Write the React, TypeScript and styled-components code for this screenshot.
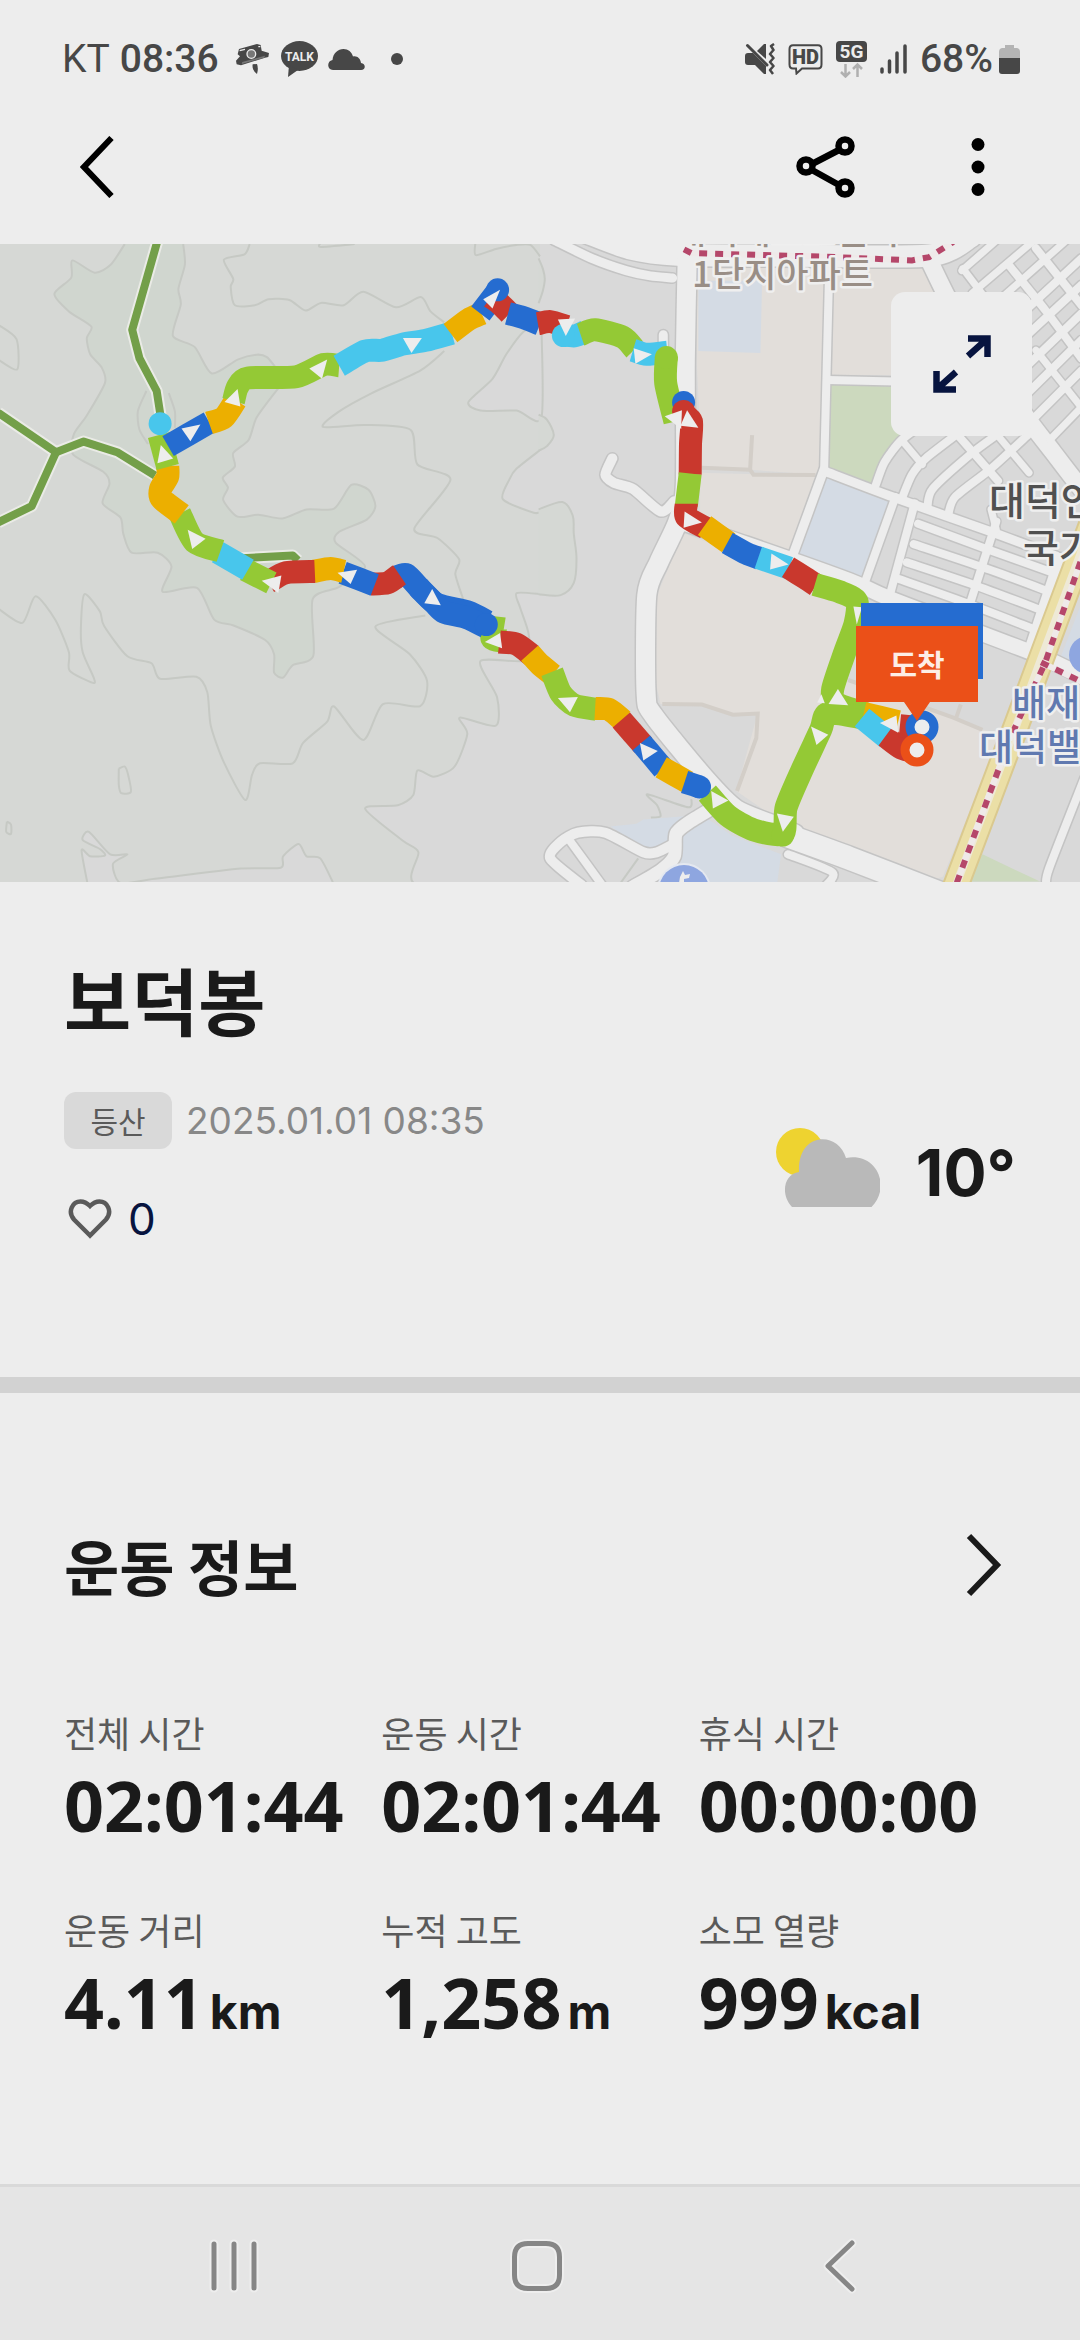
import React from 'react';
import styled, { createGlobalStyle } from 'styled-components';

const sans = `"Noto Sans CJK KR", "Noto Sans", sans-serif`;
const latin = `Inter, "Noto Sans CJK KR", sans-serif`;

const color = {
  page: '#ededed',
  ink: '#1a1a1a',
  navy: '#07143f',
  muted: '#5a5a5a',
  faint: '#888888',
  status: '#474747',
};

const GlobalStyle = createGlobalStyle`
  * { box-sizing: border-box; }
  body { margin: 0; background: ${color.page}; font-family: ${sans}; color: ${color.ink}; }
  button { border: 0; padding: 0; background: none; color: inherit; font: inherit; cursor: pointer; }
  svg { display: block; }
`;

const Screen = styled.div`
  display: flex;
  flex-direction: column;
  min-height: 100vh;
  overflow: hidden;
`;

/* ---------- status bar ---------- */

const StatusBar = styled.div`
  display: flex;
  justify-content: space-between;
  align-items: center;
  padding: 28px 60px 0 62px;
  height: 90px;
  color: ${color.status};
  font: 500 39px/48px Roboto, sans-serif;
`;

const StatusGroup = styled.div<{ $gap: number }>`
  display: flex;
  align-items: center;
  gap: ${(p) => p.$gap}px;
`;

const Carrier = styled.span`
  font-weight: 400;
`;

const Clock = styled.span`
  margin-right: 6px;
`;

const Dot = styled.span`
  width: 12px;
  height: 12px;
  margin-left: 16px;
  border-radius: 50%;
  background: ${color.status};
`;

const Battery = styled.span`
  display: flex;
  align-items: center;
  gap: 6px;
`;

/* ---------- app bar ---------- */

const AppBar = styled.header`
  display: flex;
  justify-content: space-between;
  align-items: center;
  height: 154px;
  padding: 0 58px 0 53px;
`;

const Actions = styled.div`
  display: flex;
  gap: 64px;
`;

const IconButton = styled.button`
  display: grid;
  place-items: center;
  width: 88px;
  height: 88px;
`;

/* ---------- map ---------- */

const MapFrame = styled.section`
  position: relative;
  line-height: 0;
`;

const MapCanvas = styled.svg`
  width: 100%;
  height: auto;
`;

const ExpandButton = styled.button`
  position: absolute;
  top: 48px;
  right: 48px;
  display: grid;
  place-items: center;
  width: 141px;
  height: 144px;
  border-radius: 14px;
  background: ${color.page};
`;

/* ---------- summary ---------- */

const Summary = styled.section`
  padding: 64px 64px 134px;
  border-bottom: 16px solid #d2d2d2;
`;

const Title = styled.h1`
  margin: 0 0 42px;
  font-size: 73px;
  line-height: 104px;
  font-weight: 700;
`;

const SummaryRow = styled.div`
  display: flex;
  justify-content: space-between;
  align-items: center;
`;

const Details = styled.div`
  display: flex;
  flex-direction: column;
  align-items: flex-start;
  gap: 46px;
`;

const Meta = styled.div`
  display: flex;
  align-items: center;
  gap: 14px;
`;

const Badge = styled.span`
  width: 108px;
  border-radius: 12px;
  background: #d9d9d9;
  color: ${color.muted};
  font-size: 30px;
  line-height: 57px;
  text-align: center;
`;

const DateText = styled.time`
  color: ${color.faint};
  font: 400 37px/57px ${latin};
`;

const LikeButton = styled.button`
  display: flex;
  align-items: center;
  gap: 16px;
  padding-left: 4px;
  color: ${color.navy};
  font: 400 44px/48px ${latin};
`;

const Weather = styled.div`
  display: flex;
  align-items: center;
  gap: 36px;
`;

const Temperature = styled.span`
  padding-top: 10px;
  font: 700 64px/76px ${latin};
`;

/* ---------- workout info ---------- */

const Info = styled.section`
  padding: 128px 64px 60px;
`;

const InfoHeader = styled.div`
  display: flex;
  justify-content: space-between;
  align-items: center;
  margin-bottom: 97px;
`;

const InfoTitle = styled.h2`
  margin: 0;
  font-size: 60px;
  line-height: 88px;
  font-weight: 700;
`;

const MoreButton = styled.button`
  padding: 12px 14px;
`;

const Stats = styled.dl`
  display: grid;
  grid-template-columns: repeat(3, 1fr);
  row-gap: 56px;
  margin: 0;
`;

const Stat = styled.div`
  display: flex;
  flex-direction: column;
  gap: 5px;
`;

const StatLabel = styled.dt`
  color: ${color.muted};
  font-size: 36px;
  line-height: 52px;
`;

const StatValue = styled.dd`
  margin: 0;
  white-space: nowrap;
  font: 700 70px/84px "Noto Sans", sans-serif;
`;

const Unit = styled.span`
  margin-left: 6px;
  font-family: ${latin};
  font-size: 48px;
  line-height: 1;
`;

/* ---------- system navigation ---------- */

const NavBar = styled.nav`
  display: grid;
  grid-template-columns: repeat(3, 1fr);
  margin-top: auto;
  height: 156px;
  padding: 0 88px 0 82px;
  border-top: 3px solid #d9d9d9;
  background: #e5e5e5;
`;

const NavButton = styled.button`
  display: grid;
  place-items: center;
  height: 158px;
`;

/* ---------- map data ---------- */

// The map is digitised as two square sheets, each 1568 units a side,
// covering the left and the right half of the canvas.
type Sheet = 'w' | 'e';
type Point = [number, number];

const project = (sheet: Sheet, coords: string): Point[] => {
  const n = coords.trim().split(/[\s,]+/).map(Number);
  const out: Point[] = [];
  for (let i = 0; i < n.length; i += 2) {
    const x = (n[i] * 540) / 1568 + (sheet === 'e' ? 540 : 0);
    const y = (n[i + 1] * 640) / 1568 - 4;
    out.push([Math.round(x * 10) / 10, Math.round(y * 10) / 10]);
  }
  return out;
};

const straight = (sheet: Sheet, coords: string, close = false) =>
  'M' + project(sheet, coords).map((p) => p.join(' ')).join('L') + (close ? 'Z' : '');

const curved = (sheet: Sheet, coords: string, tension = 8) => {
  const p = project(sheet, coords);
  let d = `M${p[0].join(' ')}`;
  for (let i = 0; i < p.length - 1; i++) {
    const a = p[i - 1] || p[i];
    const b = p[i];
    const c = p[i + 1];
    const e = p[i + 2] || c;
    d += `C${b[0] + (c[0] - a[0]) / tension} ${b[1] + (c[1] - a[1]) / tension} ${c[0] - (e[0] - b[0]) / tension} ${c[1] - (e[1] - b[1]) / tension} ${c[0]} ${c[1]}`;
  }
  return d;
};

const valley =
  '362 10 322 60 275 80 210 50 207 92 158 132 200 175 265 212 252 240 262 280 295 312 305 350 252 430 215 475 212 525 300 568 318 597 298 645 350 680 358 720 382 766 458 766 498 800 472 862 572 852 622 930 680 945 770 980 796 1015 796 1060 822 1072 850 1042 910 1018 908 880 985 850 1060 800 975 742 985 715 1065 685 1090 652 1070 612 1020 600 970 658 890 660 820 682 750 673 690 678 648 637 662 607 647 582 682 555 677 522 722 490 745 435 800 372 830 340 800 312 775 287 745 281 690 293 615 327 565 262 502 235 525 158 518 120 537 60 532 10';

const plains: [Sheet, string][] = [
  ['w', '1568 205 1520 225 1470 280 1430 340 1360 397 1395 418 1500 418 1572 435 1572 205'],
  ['w', '1572 512 1500 560 1480 585 1460 635 1550 668 1572 665'],
  ['w', '1572 868 1500 865 1510 900 1535 965 1530 1030 1395 1032 1443 1120 1440 1190 1335 1170 1357 1210 1320 1290 1260 1315 1212 1300 1200 1360 1155 1385 1060 1393 1170 1472 1215 1500 1212 1580 1572 1580'],
  ['w', '255 1580 237 1495 262 1510 305 1508 290 1492 240 1470 258 1450 320 1505 370 1505 328 1528 350 1575 450 1565 700 1540 815 1538 822 1510 867 1480 890 1510 930 1515 970 1580'],
];

const woods: string[] = [
  '-4 45 8 70 14 95 8 125 -4 155',
  '-4 428 20 440 40 478 20 505 -4 516',
  '-4 660 65 642 95 675 98 720 106 780 98 840 60 870 -4 868',
];

const contours: [Sheet, string][] = [
  ['w', '725 10 710 35 650 48 677 95 670 115 682 160 740 160 780 145 840 147 887 173 932 154 998 160 1055 127 1150 165 1222 140 1250 175 1290 202'],
  ['w', '930 8 932 17 1030 10'],
  ['w', '1380 8 1382 37 1440 22 1500 12 1540 12 1568 40'],
  ['w', '-5 208 48 243 50 317 -5 293'],
  ['w', '1290 272 1220 320 1080 375 985 420 938 458 1060 453 1192 465 1212 550 1308 587 1203 707 1270 730 1333 782 1322 818 1345 880'],
  ['w', '425 370 400 420 405 465 430 500'],
  ['w', '490 375 508 420 508 460'],
  ['w', '-5 903 65 938 103 873 160 930 200 1010 202 1055 270 1085 272 1072 240 1010 235 950 245 868 290 910 302 945 370 1020 440 1037 465 1075 570 1070 602 1108 612 1190 650 1280 712 1372 732 1310 755 1282 850 1282 880 1232 950 1180 970 1143 1055 1225 1112 1137 1220 1142 1240 1080 1190 1015 1090 947 1235 920'],
  ['w', '345 1295 362 1290 372 1310 380 1352 352 1355 345 1335 345 1295'],
  ['w', '20 1425 32 1432 32 1455 18 1450 20 1425'],
];

const blocks: [string, string][] = [
  ['#e2deda', '455 66 826 66 810 575 470 555 455 300'],
  ['#e2deda', '852 66 1120 66 1155 130 1155 332 848 330'],
  ['#e2deda', '465 570 800 578 722 765 465 680'],
  ['#e2deda', '415 718 900 870 915 920 880 1075 1285 1200 1340 1210 1170 1560 1140 1568 700 1425 570 1350 632 1160 560 1163 470 1138 350 1137 335 1080 340 870'],
  ['#d4dbe4', '460 100 645 100 640 277 460 272'],
  ['#d4dbe4', '832 578 1025 638 938 834 746 768'],
  ['#d4dbe4', '404 1568 404 1480 430 1435 490 1420 560 1460 700 1505 688 1580 404 1580'],
  ['#d4dbe4', '205 1437 280 1430 300 1420 420 1412 380 1480 310 1492 250 1462'],
  ['#d4dbe4', '1572 890 1508 1030 1572 1050'],
  ['#ccd9be', '845 353 1100 357 1100 470 1030 510 960 596 836 556'],
  ['#ccd9be', '1285 1505 1452 1572 1235 1572'],
];

const roads: [number, string][] = [
  [9, '40 0 150 45 250 75 320 88 385 93'],
  [22, '130 -20 260 20 400 36 700 38 1130 38 1250 -8'],
  [9, '358 232 358 300'],
  [10, '210 535 190 575 215 595 270 610 350 665 390 640'],
  [19, '428 20 422 300 422 600 400 690 345 790 310 870 308 1110 330 1165 480 1320 570 1395 700 1440 740 1455'],
  [23, '720 1460 900 1515 1160 1600'],
  [15, '410 692 600 745 900 835 1020 880 1440 1015 1572 1068'],
  [8, '840 60 825 565'],
  [8, '835 343 1100 348'],
  [9, '825 562 735 770'],
  [9, '825 566 1025 630 1310 715 1500 775'],
  [8, '1032 630 945 835'],
  [17, '1130 50 1215 190 1400 420 1490 520 1572 610'],
  [7, '1225 75 1340 -10'],
  [7, '1255 130 1450 -10'],
  [7, '1330 150 1540 -8'],
  [8, '1400 180 1572 45'],
  [8, '1380 260 1572 110'],
  [8, '1400 320 1572 180'],
  [8, '1410 380 1572 245'],
  [8, '1430 440 1572 320'],
  [7, '1480 490 1572 410'],
  [7, '1228 70 1300 150'],
  [8, '1360 60 1470 175 1572 290'],
  [8, '1440 20 1572 160'],
  [7, '1440 270 1572 410'],
  [8, '975 600 1000 545 1050 490 1130 440'],
  [8, '1050 635 1080 575 1120 535 1220 470'],
  [8, '1125 655 1140 610 1250 525 1330 475'],
  [8, '1185 675 1205 630 1310 560 1420 475'],
  [7, '1055 495 1110 550'],
  [8, '1205 470 1330 590'],
  [7, '1320 470 1420 570'],
  [7, '1310 660 1325 710'],
  [8, '1085 745 1290 803 1480 862'],
  [8, '1098 695 1290 755 1490 815'],
  [8, '1065 790 1260 845 1450 905'],
  [8, '1040 830 1240 890 1430 952'],
  [8, '1088 645 1015 872'],
  [8, '1325 690 1245 900'],
  [11, '1510 780 1420 1010'],
  [10, '120 1580 30 1515 60 1475 110 1452 190 1452 300 1500 340 1500 392 1478'],
  [8, '85 1470 180 1580'],
  [13, '270 1585 350 1545 390 1510 395 1455 430 1428 500 1392'],
  [8, '720 1505 850 1550 820 1590'],
  [8, '1470 1580 1478 1540 1580 1320'],
];

const paths = [
  '470 558 610 563 620 575 800 576',
  '616 478 610 562',
  '355 1137 470 1138 560 1163 632 1160 628 1220 572 1350',
  '895 1078 1200 1170 1285 1200',
  '1222 1138 1208 1172',
];

const trails = [
  '458 0 384 220 405 290 455 370 466 430',
  '-5 423 163 520 243 494 340 520 450 577',
  '163 520 92 652 -5 692',
  '690 780 850 773 865 785',
];

const tint = { b: '#256cd0', r: '#c9382d', a: '#ecaf00', g: '#94c935', s: '#48c6ec' };

const route: [keyof typeof tint, Sheet, string][] = [
  ['g', 'w', '1435 922 1428 975 1465 982'],
  ['b', 'w', '1145 828 1180 820 1225 860 1270 893 1360 912 1415 935'],
  ['b', 'w', '1215 850 1262 890 1290 912 1355 925 1410 948'],
  ['r', 'w', '1450 985 1500 990 1545 1018'],
  ['a', 'w', '1538 1012 1568 1040 1605 1065'],
  ['r', 'w', '1075 843 1125 840 1160 820'],
  ['b', 'w', '995 815 1088 845'],
  ['a', 'w', '910 812 960 805 998 812'],
  ['r', 'w', '780 838 830 815 914 812'],
  ['g', 'w', '712 808 788 840'],
  ['s', 'w', '632 765 720 808'],
  ['g', 'w', '522 670 565 740 640 762'],
  ['a', 'w', '487 553 487 580 466 610 470 635 528 672'],
  ['g', 'w', '462 478 487 556'],
  ['b', 'w', '608 447 488 505'],
  ['a', 'w', '685 392 650 435 607 448'],
  ['g', 'w', '985 308 940 305 860 335 720 338 690 360 678 395'],
  ['s', 'w', '1312 228 1235 246 1170 255 1110 270 1060 272 985 308'],
  ['a', 'w', '1398 180 1360 195 1308 228'],
  ['b', 'w', '1395 180 1445 125'],
  ['r', 'w', '1425 140 1450 155 1480 180'],
  ['b', 'w', '1475 180 1520 190 1568 206'],
  ['s', 'e', '130 225 100 235 65 232'],
  ['r', 'e', '-6 205 30 200 78 212'],
  ['g', 'e', '118 232 160 220 240 238 275 268'],
  ['s', 'e', '270 270 310 280 370 275'],
  ['g', 'e', '367 285 365 350 392 445'],
  ['b', 'e', '400 405 425 410'],
  ['r', 'e', '415 425 440 445 437 500 436 575'],
  ['g', 'e', '436 572 425 650'],
  ['r', 'e', '425 646 425 678 482 706'],
  ['a', 'e', '478 700 548 742'],
  ['b', 'e', '544 742 600 768 638 780'],
  ['s', 'e', '634 778 724 804'],
  ['r', 'e', '720 802 770 828 802 846'],
  ['g', 'e', '798 844 870 862 920 885 915 940 885 1010 850 1100 860 1135 945 1160'],
  ['a', 'e', '940 1160 1040 1180'],
  ['g', 'e', '35 1058 60 1110 100 1140 165 1150'],
  ['a', 'e', '160 1148 200 1150 242 1178'],
  ['r', 'e', '236 1176 300 1238'],
  ['b', 'e', '294 1232 358 1296'],
  ['a', 'e', '352 1292 428 1328'],
  ['b', 'e', '420 1328 463 1340'],
  ['g', 'e', '486 1355 545 1410 620 1445 705 1455 715 1390 760 1300 815 1200 835 1160 935 1170'],
  ['s', 'e', '935 1170 1008 1220'],
  ['r', 'e', '1003 1216 1050 1245 1095 1255'],
  ['r', 'e', '1105 1195 1045 1190'],
];

const blobs: [keyof typeof tint, Sheet, string][] = [
  ['s', 'w', '465 450'],
  ['b', 'w', '1445 122'],
  ['b', 'w', '1412 942'],
  ['s', 'e', '68 234'],
  ['g', 'e', '367 288'],
  ['b', 'e', '417 398'],
  ['r', 'e', '417 420'],
  ['b', 'e', '463 1340'],
  ['g', 'e', '705 1458'],
];

const arrows: [Sheet, string][] = [
  ['w', '1403 145 1452 122 1430 168'],
  ['w', '1170 240 1225 240 1195 277'],
  ['w', '898 315 950 293 935 340'],
  ['w', '652 397 690 365 698 408'],
  ['w', '527 462 582 452 553 493'],
  ['w', '467 502 503 535 457 547'],
  ['w', '545 710 597 732 558 757'],
  ['w', '760 835 817 822 808 865'],
  ['w', '980 815 1037 808 1018 843'],
  ['w', '1255 855 1280 895 1232 890'],
  ['w', '1408 985 1452 963 1458 1000'],
  ['e', '52 195 102 192 75 235'],
  ['e', '272 265 325 280 277 303'],
  ['e', '362 432 412 417 410 463'],
  ['e', '427 417 460 460 408 455'],
  ['e', '420 665 470 692 417 705'],
  ['e', '672 768 722 795 668 807'],
  ['e', '910 898 935 900 920 942'],
  ['e', '865 1100 895 1140 838 1137'],
  ['e', '817 1113 827 1135 805 1133'],
  ['e', '787 1192 837 1212 803 1237'],
  ['e', '688 1405 737 1413 705 1450'],
  ['e', '497 1350 547 1373 502 1393'],
  ['e', '290 1232 342 1252 300 1275'],
  ['e', '52 1122 110 1120 87 1157'],
  ['e', '987 1183 1035 1165 1040 1207'],
];

const highway = '1600 700 1480 970 1385 1185 1195 1610';
const subway = ['1600 715 1465 1040 1365 1220 1195 1610', '1455 1035 1580 1085', '418 23 440 32 830 41 1080 50 1130 42 1200 5'];

const MapLabel = styled.text<{ $size: number }>`
  font: 500 ${(p) => p.$size}px ${sans};
  paint-order: stroke;
  stroke: #efefef;
  stroke-width: 5px;
  stroke-linejoin: round;
`;

const FlagLabel = styled.text`
  font: 700 30px ${sans};
  fill: #fdeee6;
`;

function RouteMap() {
  return (
    <MapCanvas viewBox="0 0 1080 638" role="img" aria-label="이동 경로 지도" fill="none">
      <rect width="1080" height="638" fill="#d9d9d9" />
      <rect width="540" height="638" fill="#d6d8d5" />
      <g stroke="#c6c9c4" strokeWidth="2" strokeLinejoin="round">
        <path d={curved('w', valley)} fill="#d0d6cf" />
        {plains.map(([s, c]) => <path key={c} d={curved(s, c)} fill="#d9d9d9" />)}
        {woods.map((c) => <path key={c} d={curved('e', c, 6)} fill="#d5d8d4" />)}
        {contours.map(([s, c]) => <path key={c} d={curved(s, c)} />)}
        <path d={curved('e', '440 1370 430 1390 312 1358 340 1385 350 1412 322 1415')} />
        <path d={curved('e', '285 1515 230 1580')} />
      </g>
      {blocks.map(([fill, c]) => <path key={c} d={straight('e', c, true)} fill={fill} />)}
      {paths.map((c) => <path key={c} d={straight('e', c)} stroke="#d3cec8" strokeWidth="4" />)}
      <g strokeLinejoin="round" strokeLinecap="round">
        {roads.map(([w, c]) => <path key={c} d={curved('e', c)} stroke="#c4c4c4" strokeWidth={w + 3} />)}
        {roads.map(([w, c]) => <path key={c} d={curved('e', c)} stroke="#ededed" strokeWidth={w} />)}
      </g>
      <path d={straight('e', highway)} stroke="#dac98f" strokeWidth="27" />
      <path d={straight('e', highway)} stroke="#ebdfa6" strokeWidth="23" />
      <path d={straight('e', highway)} stroke="#eee9d6" strokeWidth="8" />
      {subway.map((c) => (
        <g key={c} strokeWidth="6">
          <path d={straight('e', c)} stroke="#efe9e9" />
          <path d={straight('e', c)} stroke="#b5476a" strokeDasharray="8 8" />
        </g>
      ))}
      <g strokeLinejoin="round">
        {trails.map((c) => <path key={c} d={straight('w', c)} stroke="#eaebe6" strokeWidth="12" />)}
        {trails.map((c) => <path key={c} d={straight('w', c)} stroke="#739f49" strokeWidth="8" />)}
      </g>

      <circle cx="684" cy="646" r="27" fill="#e4e8f0" />
      <circle cx="684" cy="646" r="25" fill="#8ea6e0" />
      <path d="M683 627l2 4 5-1-1 4-5 1v4h-5l1-6z" fill="#ededed" />
      <circle cx="1088" cy="411" r="19" fill="#8ea6e0" />

      <MapLabel $size={35} x="674" y="0" fill="#998e86">대덕테크노밸리</MapLabel>
      <MapLabel $size={35} x="692" y="43" fill="#998e86">1단지아파트</MapLabel>
      <MapLabel $size={39} x="989" y="271" fill="#505050">대덕연</MapLabel>
      <MapLabel $size={39} x="1023" y="318" fill="#505050">국가</MapLabel>
      <MapLabel $size={37} x="1012" y="473" fill="#6079b0">배재</MapLabel>
      <MapLabel $size={37} x="979" y="517" fill="#6079b0">대덕밸</MapLabel>

      <g strokeWidth="23" strokeLinejoin="round">
        {route.map(([k, s, c]) => <path key={c} d={curved(s, c)} stroke={tint[k]} />)}
      </g>
      {blobs.map(([k, s, c]) => {
        const [[x, y]] = project(s, c);
        return <circle key={c} cx={x} cy={y} r={11.5} fill={tint[k]} />;
      })}
      {arrows.map(([s, c]) => <path key={c} d={straight(s, c, true)} fill="#ededed" />)}

      <rect x="861" y="359" width="122" height="76" fill="#256cd0" />
      <circle cx="922" cy="483" r="12" fill="#ededed" stroke="#256cd0" strokeWidth="9" />
      <path d="M856 382H978V458H930L917 477L904 458H856Z" fill="#eb5018" />
      <circle cx="917" cy="506" r="12" fill="#ededed" stroke="#eb5018" strokeWidth="9" />
      <FlagLabel x="917" y="432" textAnchor="middle">도착</FlagLabel>
    </MapCanvas>
  );
}

/* ---------- icons ---------- */

const CameraIcon = () => (
  <svg width="36" height="32" viewBox="42 40 108 96" fill={color.status}>
    <path d="M45 93L57 80L50 74L54 58L108 43L119 46L122 63L144 70L142 82L132 84L60 107L47 104Z" />
    <path d="M62 103L130 84L132 78L64 97Z" fill="#777" />
    <circle cx="91" cy="73" r="13" fill="#777" stroke="#ededed" strokeWidth="4" />
    <path d="M56 63L72 59M112 51H118" stroke="#ededed" strokeWidth="4" />
    <path d="M95 104L108 103Q113 116 108 133Q92 120 95 104Z" />
  </svg>
);

const TalkIcon = () => (
  <svg width="37" height="36" viewBox="0 0 37 36">
    <ellipse cx="18.500" cy="15" rx="18.500" ry="15" fill={color.status} />
    <path d="M8 24L7 36L17 29Z" fill={color.status} />
    <text x="18.500" y="20" textAnchor="middle" fontFamily="Roboto, sans-serif" fontWeight="700" fontSize="12" fill="#ededed">TALK</text>
  </svg>
);

const CloudIcon = () => (
  <svg width="37" height="21" viewBox="0 0 37 21" fill={color.status}>
    <path d="M5 21C-1 21-1.500 12 4.500 11C5 4 10 0 15.500 0C20 0 24 3 25 7.500C29 6.500 32.500 9.500 33 14C38 14.500 38 21 33 21Z" />
  </svg>
);

const MuteIcon = () => (
  <svg width="30" height="32" viewBox="0 0 30 32" fill={color.status}>
    <path d="M0 13Q0 10 3 10H8L21 23V31H19L10 22H3Q0 22 0 19Z" />
    <path d="M12 8L19 1H21V16Z" />
    <path d="M2.500 2.500L22 22" stroke={color.status} strokeWidth="3" strokeLinecap="round" />
    <path d="M29 1L26 3L28.500 7L25 11L28.500 15L25 19L28.500 23L25 27L28 31" fill="none" stroke={color.status} strokeWidth="2.500" strokeLinejoin="round" />
  </svg>
);

const HdIcon = () => (
  <svg width="35" height="31" viewBox="0 0 35 31">
    <path d="M5 1.200H30Q33.500 1.200 33.500 5V20.500Q33.500 24.500 30 24.500H14L8.500 29.500L8 24.500H5Q1.500 24.500 1.500 20.500V5Q1.500 1.200 5 1.200Z" fill="none" stroke={color.status} strokeWidth="2" />
    <text x="17.500" y="20" textAnchor="middle" fontFamily="Roboto, sans-serif" fontWeight="900" fontSize="20" fill={color.status}>HD</text>
  </svg>
);

const FiveGIcon = () => (
  <svg width="31" height="37" viewBox="0 0 31 37">
    <rect width="31" height="21" rx="4" fill={color.status} />
    <text x="15.500" y="17" textAnchor="middle" fontFamily="Roboto, sans-serif" fontWeight="700" fontSize="19" fill="#ededed">5G</text>
    <path d="M9.500 23V35M5 31L9.500 35.500L14 31M21.500 36V24M17 28L21.500 23.500L26 28" fill="none" stroke="#b0b0b0" strokeWidth="2.500" />
  </svg>
);

const SignalIcon = () => (
  <svg width="27" height="30" viewBox="0 0 27 30" stroke={color.status} strokeWidth="3.500" strokeLinecap="round">
    <path d="M2 25V28M9.500 17V28M17 9V28M25 2V28" />
  </svg>
);

const BatteryIcon = () => (
  <svg width="21" height="29" viewBox="0 0 21 29">
    <path d="M6 3V0H15V3H18Q21 3.500 21 7V14H0V7Q0 3.500 3 3Z" fill="#b4b4b4" />
    <path d="M0 13H21V26Q21 29 18 29H3Q0 29 0 26Z" fill={color.status} />
  </svg>
);

const BackIcon = () => (
  <svg width="34" height="62" viewBox="0 0 34 62" fill="none" stroke="#000" strokeWidth="6">
    <path d="M31.500 2L4 31L31.500 60" />
  </svg>
);

const ShareIcon = () => (
  <svg width="60" height="62" viewBox="0 0 60 62" fill="none" stroke="#000" strokeWidth="6.500">
    <path d="M16 28L43 14M16 34L43 49" />
    <circle cx="49" cy="10" r="6.500" />
    <circle cx="10" cy="30" r="6.500" />
    <circle cx="49" cy="52" r="6.500" />
  </svg>
);

const MenuIcon = () => (
  <svg width="14" height="60" viewBox="0 0 14 60">
    <circle cx="7" cy="7.500" r="6.500" />
    <circle cx="7" cy="30" r="6.500" />
    <circle cx="7" cy="52.500" r="6.500" />
  </svg>
);

const ExpandIcon = () => (
  <svg width="58" height="58" viewBox="0 0 58 58" fill="none" stroke={color.navy} strokeWidth="6.500">
    <path d="M35 3.500H54.500V22M54 4L35 21" />
    <path d="M23 54.500H3.500V36M4 54L23 37" />
  </svg>
);

const HeartIcon = () => (
  <svg width="44" height="40" viewBox="0 0 44 40" fill="none" stroke={color.muted} strokeWidth="4.500">
    <path d="M22 36.500L6 20.500C-1 12 5 2.500 12.500 2.500C16.500 2.500 19 4 22 7C25 4 27.500 2.500 31.500 2.500C39 2.500 45 12 38 20.500Z" />
  </svg>
);

const WeatherIcon = () => (
  <svg width="104" height="79" viewBox="0 0 104 79">
    <circle cx="24" cy="24" r="24" fill="#eed330" />
    <path d="M16 79C4 66 8 46 23 44C21 4 62 2 70 30C102 24 115 60 95.500 79Z" fill="#b9b9b9" />
  </svg>
);

const MoreIcon = () => (
  <svg width="36" height="64" viewBox="0 0 36 64" fill="none" stroke={color.ink} strokeWidth="6">
    <path d="M3 3L31 32L3 61" />
  </svg>
);

const NavIcon = ({ d, width }: { d: string; width: number }) => (
  <svg width={width} height="58" viewBox={`0 0 ${width} 58`} fill="none" strokeLinecap="round" strokeLinejoin="round">
    <path d={d} stroke="#eeeeee" strokeWidth="9" />
    <path d={d} stroke="#868686" strokeWidth="5" />
  </svg>
);

/* ---------- screen ---------- */

const stats = [
  { label: '전체 시간', value: '02:01:44' },
  { label: '운동 시간', value: '02:01:44' },
  { label: '휴식 시간', value: '00:00:00' },
  { label: '운동 거리', value: '4.11', unit: 'km' },
  { label: '누적 고도', value: '1,258', unit: 'm' },
  { label: '소모 열량', value: '999', unit: 'kcal' },
];

export default function App() {
  return (
    <Screen>
      <GlobalStyle />
      <StatusBar>
        <StatusGroup $gap={10}>
          <Carrier>KT</Carrier>
          <Clock>08:36</Clock>
          <CameraIcon />
          <TalkIcon />
          <CloudIcon />
          <Dot />
        </StatusGroup>
        <StatusGroup $gap={13}>
          <MuteIcon />
          <HdIcon />
          <FiveGIcon />
          <SignalIcon />
          <Battery>
            68%
            <BatteryIcon />
          </Battery>
        </StatusGroup>
      </StatusBar>

      <AppBar>
        <IconButton aria-label="뒤로"><BackIcon /></IconButton>
        <Actions>
          <IconButton aria-label="공유"><ShareIcon /></IconButton>
          <IconButton aria-label="더보기"><MenuIcon /></IconButton>
        </Actions>
      </AppBar>

      <MapFrame>
        <RouteMap />
        <ExpandButton aria-label="지도 확대"><ExpandIcon /></ExpandButton>
      </MapFrame>

      <Summary>
        <Title>보덕봉</Title>
        <SummaryRow>
          <Details>
            <Meta>
              <Badge>등산</Badge>
              <DateText dateTime="2025-01-01T08:35">2025.01.01 08:35</DateText>
            </Meta>
            <LikeButton aria-label="좋아요 0"><HeartIcon />0</LikeButton>
          </Details>
          <Weather>
            <WeatherIcon />
            <Temperature>10°</Temperature>
          </Weather>
        </SummaryRow>
      </Summary>

      <Info>
        <InfoHeader>
          <InfoTitle>운동 정보</InfoTitle>
          <MoreButton aria-label="운동 정보 자세히"><MoreIcon /></MoreButton>
        </InfoHeader>
        <Stats>
          {stats.map((s) => (
            <Stat key={s.label}>
              <StatLabel>{s.label}</StatLabel>
              <StatValue>
                {s.value}
                {s.unit && <Unit>{s.unit}</Unit>}
              </StatValue>
            </Stat>
          ))}
        </Stats>
      </Info>

      <NavBar>
        <NavButton aria-label="최근 앱"><NavIcon width={54} d="M7 7V51M27 7V51M47 7V51" /></NavButton>
        <NavButton aria-label="홈"><NavIcon width={58} d="M20 6.500H38Q51.500 6.500 51.500 20V38Q51.500 51.500 38 51.500H20Q6.500 51.500 6.500 38V20Q6.500 6.500 20 6.500Z" /></NavButton>
        <NavButton aria-label="뒤로 가기"><NavIcon width={36} d="M30 6L6 29L30 52" /></NavButton>
      </NavBar>
    </Screen>
  );
}
